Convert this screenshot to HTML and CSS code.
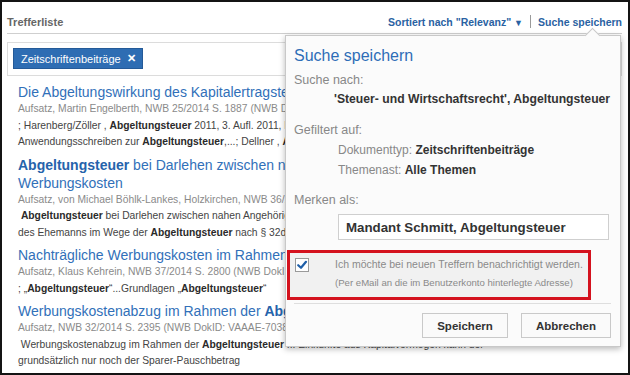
FILE: index.html
```html
<!DOCTYPE html>
<html lang="de">
<head>
<meta charset="utf-8">
<link rel="stylesheet" href="styles.css">
</head>
<body>
<div class="frame">
  <div class="header">
    <span class="header-title">Trefferliste</span>
    <div class="header-links">
      <a class="hlink">Sortiert nach "Relevanz" <span class="caret">▼</span></a>
      <span class="sep"></span>
      <a class="hlink">Suche speichern</a>
    </div>
  </div>
  <div class="filterbox">
    <span class="tag">Zeitschriftenbeiträge <span class="tag-x">✕</span></span>
  </div>
  <div class="results">
    <div class="result">
      <div class="r-title">Die Abgeltungswirkung des Kapitalertragsteuerabzugs bei Einkünften aus Kapitalvermögen</div>
      <div class="r-meta">Aufsatz, Martin Engelberth, NWB 25/2014 S. 1887 (NWB DokID: VAAAE-67120)</div>
      <div class="r-text">; Harenberg/Zöller , <b>Abgeltungsteuer</b> 2011, 3. Aufl. 2011, Rz. 102 ff.; BMF-Schreiben</div>
      <div class="r-text">Anwendungsschreiben zur <b>Abgeltungsteuer</b>,...; Dellner , <b>Abgeltungsteuer</b> und Werbungskosten</div>
    </div>
    <div class="result">
      <div class="r-title"><b>Abgeltungsteuer</b> bei Darlehen zwischen nahen Angehörigen und Werbungskosten</div>
      <div class="r-title">Werbungskosten</div>
      <div class="r-meta">Aufsatz, von Michael Böhlk-Lankes, Holzkirchen, NWB 36/2014 S. 2710</div>
      <div class="r-text">&nbsp;<b>Abgeltungsteuer</b> bei Darlehen zwischen nahen Angehörigen ... Zinsen aus Darlehen</div>
      <div class="r-text">des Ehemanns im Wege der <b>Abgeltungsteuer</b> nach § 32d EStG</div>
    </div>
    <div class="result">
      <div class="r-title">Nachträgliche Werbungskosten im Rahmen der Abgeltungsteuer</div>
      <div class="r-meta">Aufsatz, Klaus Kehrein, NWB 37/2014 S. 2800 (NWB DokID: VAAAE-71234)</div>
      <div class="r-text">; „<b>Abgeltungsteuer</b>“...Grundlagen „<b>Abgeltungsteuer</b>“</div>
    </div>
    <div class="result">
      <div class="r-title">Werbungskostenabzug im Rahmen der <b>Abgeltungsteuer</b></div>
      <div class="r-meta">Aufsatz, NWB 32/2014 S. 2395 (NWB DokID: VAAAE-70388)</div>
      <div class="r-text">&nbsp;Werbungskostenabzug im Rahmen der <b>Abgeltungsteuer</b> ... Einkünfte aus Kapitalvermögen kann der</div>
      <div class="r-text">grundsätzlich nur noch der Sparer-Pauschbetrag</div>
    </div>
  </div>

  <div class="popup">
    <span class="arrow"></span>
    <div class="p-title">Suche speichern</div>
    <div class="p-label">Suche nach:</div>
    <div class="p-query">'Steuer- und Wirtschaftsrecht', Abgeltungsteuer</div>
    <div class="p-label p-gap">Gefiltert auf:</div>
    <div class="p-filters">
      <div class="p-filter">Dokumenttyp: <b>Zeitschriftenbeiträge</b></div>
      <div class="p-filter">Themenast: <b>Alle Themen</b></div>
    </div>
    <div class="p-label p-gap2">Merken als:</div>
    <div class="p-input">Mandant Schmitt, Abgeltungsteuer</div>
    <div class="notify">
      <span class="check">
        <svg viewBox="0 0 12 12" width="12" height="12"><path d="M2.2 6.2 L5 8.8 L10 2.8" fill="none" stroke="#1f5fa8" stroke-width="2.2" stroke-linecap="round" stroke-linejoin="round"/></svg>
      </span>
      <div class="notify-text">
        <div class="n-main">Ich möchte bei neuen Treffern benachrichtigt werden.</div>
        <div class="n-sub">(Per eMail an die im Benutzerkonto hinterlegte Adresse)</div>
      </div>
    </div>
    <div class="p-footer">
      <span class="btn btn-save">Speichern</span>
      <span class="btn btn-cancel">Abbrechen</span>
    </div>
  </div>
</div>
</body>
</html>
```

FILE: styles.css
```css
* { box-sizing: border-box; }
html, body { margin: 0; padding: 0; background: #fff; }
body { font-family: "Liberation Sans", Arial, sans-serif; }

.frame {
  position: relative;
  width: 630px;
  height: 375px;
  border: 2px solid #141414;
  overflow: hidden;
  background: #fff;
  padding: 0 6px 0 5px;
}

.header {
  display: flex;
  justify-content: space-between;
  align-items: flex-end;
  height: 32px;
  padding-bottom: 5px;
  border-bottom: 1px solid #cfcfcf;
}
.header-title { font-size: 11px; font-weight: bold; color: #666; }
.header-links { display: flex; align-items: center; gap: 7px; }
.hlink { font-size: 10.5px; font-weight: bold; color: #2a62a2; }
.caret { font-size: 9px; }
.sep { display: inline-block; width: 1px; height: 13px; background: #9a9a9a; }

.filterbox {
  margin-top: 8px;
  height: 34px;
  border: 1px solid #dcdcdc;
  padding: 5px 5px;
}
.tag {
  display: inline-flex;
  align-items: center;
  gap: 6px;
  height: 21px;
  padding: 0 6px 0 7px;
  background: #2e6db3;
  border: 1px solid #245a98;
  color: #fff;
  font-size: 11px;
}
.tag-x { font-size: 11px; font-weight: bold; }

.results { padding: 7px 0 0 11px; white-space: nowrap; }
.result { margin-bottom: 5px; }
.r-title { font-size: 14px; line-height: 18px; color: #3170b9; }
.r-title b { color: #2563ab; }
.r-meta { font-size: 10.3px; line-height: 16.5px; color: #8a8a8a; }
.r-text { font-size: 10.3px; line-height: 16.5px; color: #444; }
.r-text b { color: #2a2a2a; }

.popup {
  position: absolute;
  left: 283px;
  top: 33px;
  width: 336px;
  height: 312px;
  background: #fbfbfb;
  border: 1px solid #c8c8c8;
  box-shadow: 0 2px 6px rgba(0,0,0,0.28);
  padding: 8px 9px 0 8px;
  white-space: nowrap;
}
.arrow {
  position: absolute;
  top: -6px;
  right: 22px;
  width: 11px;
  height: 11px;
  background: #fbfbfb;
  border-left: 1px solid #c8c8c8;
  border-top: 1px solid #c8c8c8;
  transform: rotate(45deg);
}
.p-title { font-size: 16px; line-height: 24px; color: #2e6db7; }
.p-label { font-size: 12.5px; line-height: 16px; color: #888; margin-top: 4px; }
.p-gap { margin-top: 14px; }
.p-gap2 { margin-top: 12px; }
.p-query { font-size: 12.2px; line-height: 18px; font-weight: bold; color: #333; padding-left: 40px; margin-top: 2px; }
.p-filters { margin-top: 2px; padding-left: 44px; }
.p-filter { font-size: 12px; line-height: 20px; color: #888; }
.p-filter b { color: #333; }
.p-input {
  margin: 6px 2px 0 44px;
  height: 26px;
  background: #fff;
  border: 1px solid #cfcfcf;
  font-size: 13.3px;
  font-weight: bold;
  color: #333;
  padding: 0 0 0 7px;
  display: flex;
  align-items: center;
}
.notify {
  display: flex;
  align-items: flex-start;
  margin: 10px 0 0 -7px;
  width: 304px;
  height: 50px;
  border: 3px solid #d4121e;
  background: #f1f1f1;
  padding: 4px 0 0 5px;
  gap: 26px;
}
.check {
  flex: none;
  width: 14px;
  height: 14px;
  margin-top: 1px;
  background: #fff;
  border: 1px solid #9a9a9a;
  display: flex;
  align-items: center;
  justify-content: center;
}
.n-main { font-size: 10.5px; line-height: 14px; color: #8a8a8a; }
.n-sub { font-size: 9.6px; line-height: 15px; color: #8a8a8a; margin-top: 4px; }
.p-footer {
  margin-top: 3px;
  border-top: 1px solid #dedede;
  display: flex;
  justify-content: flex-end;
  gap: 13px;
  padding-top: 9px;
}
.btn {
  display: inline-flex;
  align-items: center;
  justify-content: center;
  height: 25px;
  background: #fafafa;
  border: 1px solid #c9c9c9;
  font-size: 11.5px;
  font-weight: bold;
  color: #333;
}
.btn-save { width: 86px; }
.btn-cancel { width: 90px; }
```
